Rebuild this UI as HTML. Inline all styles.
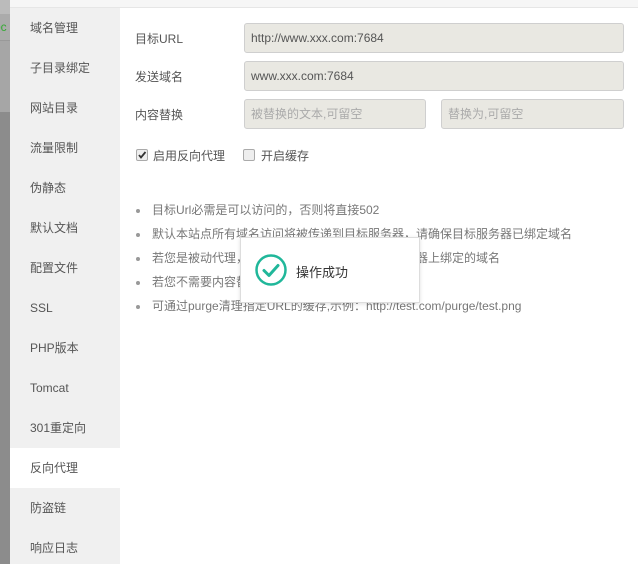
<!DOCTYPE html>
<html><head><meta charset="utf-8"><style>
*{margin:0;padding:0;box-sizing:border-box}
body{width:638px;height:564px;overflow:hidden;background:#fff;font-family:"Liberation Sans","Noto Sans CJK SC",sans-serif;font-size:12px;color:#555;position:relative}
.strip{position:absolute;left:0;top:0;width:10px;height:564px;background:#8c8c8c}
.strip .a{position:absolute;top:0;left:0;width:10px;height:14px;background:#bbb}
.strip .b{position:absolute;top:14px;left:0;width:10px;height:26px;background:#ababab;color:#3a3;font-size:12px;line-height:26px;overflow:hidden;text-indent:-6px}
.strip .c{position:absolute;top:40px;left:0;width:10px;height:72px;background:#a6a6a6;border-top:1px solid #999}
.top{position:absolute;left:10px;top:0;width:628px;height:8px;background:#f6f6f6;border-bottom:1px solid #e6e6e6}
.side{position:absolute;left:10px;top:8px;width:110px;height:556px;background:#f0f0f0}
.side div{height:40px;line-height:41px;padding-left:20px;color:#555;font-size:12px}
.side .act{background:#fff}
.lbl{position:absolute;left:135px;font-size:12px;color:#555}
.in{position:absolute;height:30px;background:#e9e8e2;border:1px solid #cfcfcf;border-radius:3px;line-height:28px;padding-left:6px;font-size:12px;color:#555}
.ph{color:#aaa}
.cb{position:absolute;top:149px;width:12px;height:12px;border:1px solid #aaa;border-radius:2px;background:#eee}
ul{position:absolute;left:135px;top:200px;list-style:none}
li{height:24px;line-height:21px;color:#777;font-size:12px;position:relative;padding-left:17px}
li:before{content:"";position:absolute;left:1px;top:9px;width:4px;height:4px;border-radius:2px;background:#999}
.toast{position:absolute;left:240px;top:237px;width:180px;height:66px;background:#fff;border:1px solid #ddd;box-shadow:0 1px 4px rgba(0,0,0,.12)}
.toast span{position:absolute;left:55px;top:24px;font-size:13px;color:#333}
</style></head><body>
<div class="strip"><div class="a"></div><div class="b">oc</div><div class="c"></div></div>
<div class="top"></div>
<div class="side">
<div>域名管理</div><div>子目录绑定</div><div>网站目录</div><div>流量限制</div><div>伪静态</div><div>默认文档</div><div>配置文件</div><div>SSL</div><div>PHP版本</div><div>Tomcat</div><div>301重定向</div><div class="act">反向代理</div><div>防盗链</div><div>响应日志</div>
</div>
<div class="lbl" style="top:30px">目标URL</div>
<div class="lbl" style="top:68px">发送域名</div>
<div class="lbl" style="top:106px">内容替换</div>
<div class="in" style="left:244px;top:23px;width:380px">http://www.xxx.com:7684</div>
<div class="in" style="left:244px;top:61px;width:380px">www.xxx.com:7684</div>
<div class="in ph" style="left:244px;top:99px;width:182px">被替换的文本,可留空</div>
<div class="in ph" style="left:441px;top:99px;width:183px">替换为,可留空</div>
<div class="cb" style="left:136px"><svg width="10" height="10" viewBox="0 0 10 10" style="position:absolute;left:0;top:0"><path d="M2 5 L4 7.5 L8.5 2" stroke="#333" stroke-width="1.8" fill="none"/></svg></div>
<div class="lbl" style="top:147px;left:153px">启用反向代理</div>
<div class="cb" style="left:243px"></div>
<div class="lbl" style="top:147px;left:261px">开启缓存</div>
<ul>
<li>目标Url必需是可以访问的，否则将直接502</li>
<li>默认本站点所有域名访问将被传递到目标服务器，请确保目标服务器已绑定域名</li>
<li>若您是被动代理，请在发送域名处填写您目标服务器上绑定的域名</li>
<li>若您不需要内容替换功能，请直接留空</li>
<li>可通过purge清理指定URL的缓存,示例：http://test.com/purge/test.png</li>
</ul>
<div class="toast">
<svg width="34" height="34" viewBox="0 0 34 34" style="position:absolute;left:13px;top:15px"><circle cx="17" cy="17" r="14.5" fill="none" stroke="#20b79a" stroke-width="2.5"/><path d="M10 17.5 L15 22.5 L24 12.5" fill="none" stroke="#20b79a" stroke-width="3" stroke-linecap="round" stroke-linejoin="round"/></svg>
<span>操作成功</span>
</div>
</body></html>
